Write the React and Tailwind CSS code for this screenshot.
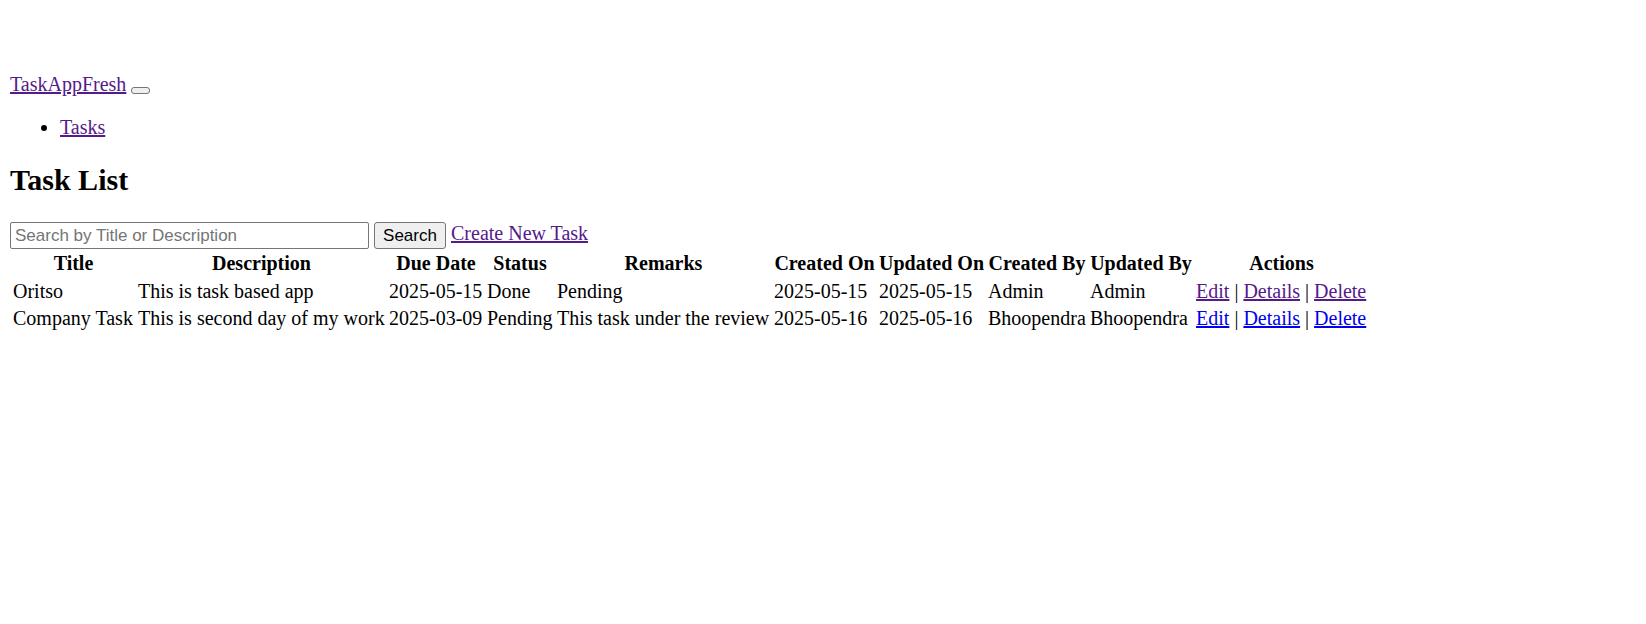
const columns = [
  { name: 'Title', width: 'w-[123px]' },
  { name: 'Description', width: 'w-[249px]' },
  { name: 'Due Date', width: 'w-[96px]' },
  { name: 'Status', width: 'w-[68px]' },
  { name: 'Remarks', width: 'w-[215px]' },
  { name: 'Created On', width: 'w-[103px]' },
  { name: 'Updated On', width: 'w-[107px]' },
  { name: 'Created By', width: 'w-[100px]' },
  { name: 'Updated By', width: 'w-[104px]' },
  { name: 'Actions', width: 'w-[173px]' },
];

const tasks = [
  {
    id: 1,
    cells: ['Oritso', 'This is task based app', '2025-05-15', 'Done', 'Pending', '2025-05-15', '2025-05-15', 'Admin', 'Admin'],
    visited: true,
  },
  {
    id: 2,
    cells: ['Company Task', 'This is second day of my work', '2025-03-09', 'Pending', 'This task under the review', '2025-05-16', '2025-05-16', 'Bhoopendra', 'Bhoopendra'],
    visited: false,
  },
];

function TextLink({ visited = true, children }) {
  return (
    <a
      href="#"
      className={
        visited
          ? 'text-[#551a8b] underline decoration-2'
          : 'text-[#0000ee] underline decoration-2'
      }
    >
      {children}
    </a>
  );
}

export default function App() {
  return (
    <div className="px-[10px] pt-[73px] font-['Liberation_Serif',serif] text-[20px] leading-[22px] text-black">
      <header>
        <nav>
          <div className="flex items-start gap-[5px] pb-px">
            <TextLink>TaskAppFresh</TextLink>
            <button
              type="button"
              aria-label="Toggle navigation"
              className="mb-px h-[7px] w-[19px] self-end rounded-[3px] border border-[#767676] bg-[#efefef]"
            />
          </div>
          <ul className="my-5 list-disc pl-[50px]">
            <li>
              <TextLink>Tasks</TextLink>
            </li>
          </ul>
        </nav>
      </header>
      <main>
        <h2 className="my-[25px] text-[30px] leading-[34px] font-bold">Task List</h2>
        <form className="flex items-start gap-[5px]" onSubmit={(e) => e.preventDefault()}>
          <input
            type="text"
            aria-label="Search by Title or Description"
            placeholder="Search by Title or Description"
            className="h-[27px] w-[359px] rounded-[2px] border border-[#767676] bg-white px-1 font-['Liberation_Sans',sans-serif] text-[17px] leading-[19px] placeholder:text-[#757575]"
          />
          <button
            type="submit"
            className="h-[27px] w-[72px] rounded-[3px] border border-[#767676] bg-[#efefef] font-['Liberation_Sans',sans-serif] text-[17px] leading-[19px]"
          >
            Search
          </button>
          <TextLink>Create New Task</TextLink>
        </form>
        <table className="border-separate border-spacing-x-[2px] border-spacing-y-[2px] whitespace-nowrap">
          <thead>
            <tr>
              {columns.map(({ name, width }) => (
                <th key={name} scope="col" className={`${width} px-px pt-px pb-[3px] text-center font-bold`}>
                  {name}
                </th>
              ))}
            </tr>
          </thead>
          <tbody>
            {tasks.map((task) => (
              <tr key={task.id}>
                {task.cells.map((text, i) => (
                  <td key={columns[i].name} className="px-px pt-px pb-[2px]">
                    {text}
                  </td>
                ))}
                <td className="px-px pt-px pb-[2px]">
                  <TextLink visited={task.visited}>Edit</TextLink> |{' '}
                  <TextLink visited={task.visited}>Details</TextLink> |{' '}
                  <TextLink visited={task.visited}>Delete</TextLink>
                </td>
              </tr>
            ))}
          </tbody>
        </table>
      </main>
    </div>
  );
}
